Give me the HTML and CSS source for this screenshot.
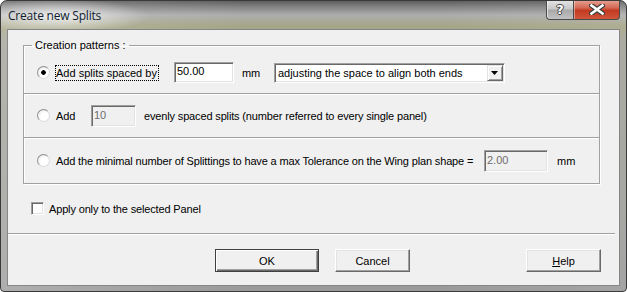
FILE: index.html
```html
<!DOCTYPE html>
<html lang="en">
<head>
  <meta charset="UTF-8">
  <title>Create new Splits</title>
  <link rel="stylesheet" href="styles.css">
</head>
<body>
  <div class="window">
    <div class="titlebar">
      <span class="title">Create new Splits</span>
      <div class="caption-buttons">
        <span class="cap-btn cap-help">?</span>
        <span class="cap-btn cap-close">
          <svg width="16" height="11" viewBox="0 0 16 11">
            <path d="M2.5 1.5 L13.5 9.5 M13.5 1.5 L2.5 9.5" stroke="#3d3d3d" stroke-width="5" stroke-linecap="square"/>
            <path d="M2.5 1.5 L13.5 9.5 M13.5 1.5 L2.5 9.5" stroke="#fff" stroke-width="2.6" stroke-linecap="square"/>
          </svg>
        </span>
      </div>
    </div>

    <div class="client">
      <fieldset class="group">
        <legend>Creation patterns :</legend>

        <div class="option option-first">
          <span class="radio checked"></span>
          <span class="opt-label focused">Add splits spaced by</span>
          <span class="field field-spacing">50.00</span>
          <span class="unit">mm</span>
          <span class="combo">
            <span class="combo-text">adjusting the space to align both ends</span>
            <span class="combo-btn">
              <svg width="7" height="4" viewBox="0 0 7 4"><path d="M0 0 H7 L3.5 4 Z" fill="#000"/></svg>
            </span>
          </span>
        </div>

        <div class="option option-second">
          <span class="radio"></span>
          <span class="opt-label add-label">Add</span>
          <span class="field field-count disabled">10</span>
          <span class="opt-note">evenly spaced splits (number referred to every single panel)</span>
        </div>

        <div class="option option-third">
          <span class="radio"></span>
          <span class="opt-label tol-label">Add the minimal number of Splittings to have a max Tolerance on the Wing plan shape =</span>
          <span class="field field-tol disabled">2.00</span>
          <span class="unit unit-tol">mm</span>
        </div>
      </fieldset>

      <div class="check-row">
        <span class="checkbox"></span>
        <span class="check-label">Apply only to the selected Panel</span>
      </div>

      <div class="separator"></div>

      <div class="buttons">
        <span class="btn btn-default btn-ok">OK</span>
        <span class="btn btn-cancel">Cancel</span>
        <span class="btn btn-help"><u>H</u>elp</span>
      </div>
    </div>
  </div>
</body>
</html>
```

FILE: styles.css
```css
body {
  margin: 0;
  background: #fff;
  font-family: "Liberation Sans", Arial, sans-serif;
  font-size: 11px;
  color: #000;
}

.window {
  width: 627px;
  height: 292px;
  box-sizing: border-box;
  border: 1px solid #3a3a3a;
  border-radius: 7px 7px 4px 4px;
  overflow: hidden;
  display: flex;
  flex-direction: column;
  background:
    radial-gradient(ellipse 90px 17px at 58px 15px, rgba(255, 255, 255, 0.75), rgba(255, 255, 255, 0)),
    linear-gradient(to right, rgba(255, 255, 255, 0.2) 0, rgba(255, 255, 255, 0) 40%, rgba(255, 255, 255, 0) 70%, rgba(255, 255, 255, 0.1) 100%),
    linear-gradient(to bottom, #5e5e5e 0, #838383 6px, #adadad 14px, #a5a586 25px, #a2a298 40px, #9a9a9a 100%);
}

.titlebar {
  height: 28px;
  flex-shrink: 0;
  display: flex;
  align-items: flex-start;
}

.title {
  font-family: "Open Sans", "Noto Sans", sans-serif;
  font-size: 12px;
  line-height: 16px;
  color: #0f1d30;
  padding: 7px 0 0 7px;
  letter-spacing: -0.2px;
}

.caption-buttons {
  margin-left: auto;
  margin-right: 6px;
  margin-top: -1px;
  display: flex;
}

.cap-btn {
  height: 20px;
  box-sizing: border-box;
  border: 1px solid #4a4a4a;
  border-top: 0;
  display: flex;
  align-items: center;
  justify-content: center;
}

.cap-help {
  width: 27px;
  border-right: 0;
  border-radius: 0 0 0 4px;
  background: linear-gradient(to bottom, #e6e6e6 0, #c9c9c9 45%, #a9a9a9 55%, #c2c2c2 100%);
  box-shadow: inset 1px 0 rgba(255, 255, 255, 0.6);
  font-family: "DejaVu Sans", sans-serif;
  font-weight: bold;
  font-size: 13px;
  color: #fff;
  text-shadow: 1px 0 #444, -1px 0 #444, 0 1px #444, 0 -1px #444;
}

.cap-close {
  width: 47px;
  border-radius: 0 0 4px 0;
  background: linear-gradient(to bottom, #e6a496 0, #d46a55 40%, #c23a22 55%, #d0563a 100%);
  box-shadow: inset 1px 0 rgba(255, 255, 255, 0.4);
}

.client {
  flex: 1;
  margin: 0 6px 5px 6px;
  border: 1px solid #868686;
  background: #f0f0f0;
  display: flex;
  flex-direction: column;
}

.group {
  margin: 8px 19px 0 15px;
  padding: 0;
  min-width: 0;
  border: 1px solid #a0a0a0;
  box-shadow: inset 1px 1px #fff, 1px 1px #fff;
}

.group legend {
  margin-left: 8px;
  padding: 0 3px;
  line-height: 14px;
}

.option {
  display: flex;
  align-items: center;
  padding-left: 13px;
}

.option-first {
  height: 41px;
}

.option-second {
  height: 43px;
  border-top: 1px solid #a0a0a0;
  box-shadow: inset 0 1px #fff;
}

.option-third {
  height: 45px;
  border-top: 1px solid #a0a0a0;
  box-shadow: inset 0 1px #fff;
}

.radio {
  width: 13px;
  height: 13px;
  box-sizing: border-box;
  border-radius: 50%;
  border: 1px solid #8f8f8f;
  border-bottom-color: #dcdcdc;
  border-right-color: #dcdcdc;
  background: radial-gradient(circle at 60% 60%, #fff 0, #fff 40%, #dedede 100%);
  flex-shrink: 0;
}

.radio.checked {
  background:
    radial-gradient(circle at 50% 50%, #000 0, #000 2px, rgba(0, 0, 0, 0) 2.6px),
    radial-gradient(circle at 60% 60%, #fff 0, #fff 40%, #dedede 100%);
}

.opt-label {
  margin-left: 6px;
  white-space: nowrap;
  letter-spacing: -0.15px;
}

.opt-label.focused {
  margin-left: 5px;
  border: 1px dotted #000;
  padding: 1px 1px 1px 0;
  letter-spacing: 0;
}

.add-label {
  width: 35px;
}

.tol-label {
  width: 428px;
}

.field {
  box-sizing: border-box;
  height: 21px;
  line-height: 17px;
  padding-left: 2px;
  background: #fff;
  border: 1px solid;
  border-color: #a0a0a0 #fff #fff #a0a0a0;
  box-shadow: inset 1px 1px #696969, inset -1px -1px #e3e3e3;
  flex-shrink: 0;
}

.field.disabled {
  background: #f0f0f0;
  color: #6d6d6d;
  height: 22px;
  line-height: 18px;
}

.field-spacing {
  width: 60px;
  margin-left: 15px;
}

.field-count {
  width: 45px;
}

.field-tol {
  width: 64px;
}

.unit {
  margin-left: 8px;
  width: 32px;
}

.unit-tol {
  margin-left: 9px;
}

.opt-note {
  margin-left: 8px;
  letter-spacing: -0.15px;
}

.combo {
  width: 231px;
  height: 20px;
  box-sizing: border-box;
  background: #fff;
  border: 1px solid;
  border-color: #a0a0a0 #fff #fff #a0a0a0;
  box-shadow: inset 1px 1px #696969, inset -1px -1px #e3e3e3;
  display: flex;
  align-items: center;
  padding: 0 1px 0 3px;
}

.combo-text {
  flex: 1;
  white-space: nowrap;
}

.combo-btn {
  width: 16px;
  height: 16px;
  box-sizing: border-box;
  background: #f0f0f0;
  border: 1px solid;
  border-color: #e3e3e3 #696969 #696969 #e3e3e3;
  box-shadow: inset 1px 1px #fff, inset -1px -1px #a0a0a0;
  display: flex;
  align-items: center;
  justify-content: center;
}

.check-row {
  display: flex;
  align-items: center;
  height: 13px;
  margin: 18px 0 0 23px;
}

.checkbox {
  width: 13px;
  height: 13px;
  box-sizing: border-box;
  background: #fff;
  border: 1px solid;
  border-color: #a0a0a0 #fff #fff #a0a0a0;
  box-shadow: inset 1px 1px #696969, inset -1px -1px #e3e3e3;
}

.check-label {
  margin-left: 5px;
  letter-spacing: -0.15px;
}

.separator {
  margin: 18px 4px 0 0;
  border-top: 1px solid #a0a0a0;
  border-bottom: 1px solid #fff;
}

.buttons {
  display: flex;
  margin-top: 14px;
  padding-left: 207px;
}

.btn {
  height: 23px;
  box-sizing: border-box;
  background: #f0f0f0;
  border: 1px solid;
  border-color: #fff #696969 #696969 #fff;
  box-shadow: inset -1px -1px #a0a0a0, inset 1px 1px #e3e3e3;
  display: flex;
  align-items: center;
  justify-content: center;
}

.btn-default {
  border-color: #404040;
  box-shadow: inset 1px 1px #fff, inset -1px -1px #696969, inset -2px -2px #a0a0a0;
}

.btn-ok {
  width: 104px;
}

.btn-cancel {
  width: 75px;
  margin-left: 16px;
}

.btn-help {
  width: 75px;
  margin-left: 116px;
}

.btn-help u {
  text-decoration-thickness: 1px;
}
```
